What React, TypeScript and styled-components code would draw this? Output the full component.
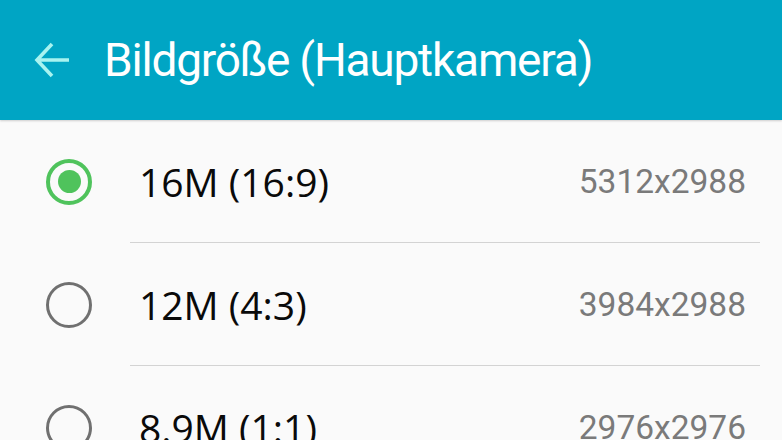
import styled, { createGlobalStyle } from 'styled-components';

type SizeOption = {
  label: string;
  resolution: string;
};

const options: SizeOption[] = [
  { label: '16M (16:9)', resolution: '5312x2988' },
  { label: '12M (4:3)', resolution: '3984x2988' },
  { label: '8.9M (1:1)', resolution: '2976x2976' },
  { label: '6M (16:9)', resolution: '3264x1836' },
];

const GlobalStyle = createGlobalStyle`
  html, body {
    margin: 0;
    padding: 0;
    width: 782px;
    height: 440px;
    overflow: hidden;
    background: #fafafa;
  }
`;

export default function App() {
  const selected = 0;
  return (
    <Screen>
      <GlobalStyle />
      <TitleBar>
        <BackButton aria-label="Zurück">
          <svg width="36" height="36" viewBox="0 0 36 36" fill="none">
            <path
              d="M35 18H3M18 2L3 18L18 34"
              stroke="#a8f3f0"
              strokeWidth="3.6"
              strokeLinecap="butt"
              strokeLinejoin="miter"
            />
          </svg>
        </BackButton>
        <Title>Bildgröße (Hauptkamera)</Title>
      </TitleBar>
      <List>
        {options.map((option, i) => (
          <Row key={option.label}>
            <RadioCell>
              <Radio $checked={i === selected} />
            </RadioCell>
            <Content>
              <Label>{option.label}</Label>
              <Resolution>{option.resolution}</Resolution>
            </Content>
          </Row>
        ))}
      </List>
    </Screen>
  );
}

const Screen = styled.div`
  width: 782px;
  height: 440px;
  background: #fafafa;
  overflow: hidden;
`;

const TitleBar = styled.header`
  height: 120px;
  background: #00a5c4;
  display: flex;
  align-items: center;
  box-shadow: 0 1px 2px rgba(0, 0, 0, 0.18);
  position: relative;
  z-index: 1;
`;

const BackButton = styled.button`
  width: 36px;
  height: 36px;
  margin-left: 34px;
  padding: 0;
  border: none;
  background: none;
  display: flex;
  align-items: center;
  justify-content: center;
`;

const Title = styled.h1`
  margin: 0 0 0 34px;
  font-family: Roboto, 'Liberation Sans', sans-serif;
  font-size: 46px;
  font-weight: 400;
  color: #ffffff;
  letter-spacing: -1.2px;
`;

const List = styled.ul`
  margin: 0;
  padding: 0;
  list-style: none;
`;

const Row = styled.li`
  height: 123px;
  display: flex;
`;

const RadioCell = styled.div`
  width: 130px;
  display: flex;
  align-items: center;
  padding-left: 46px;
  box-sizing: border-box;
`;

const Radio = styled.span<{ $checked: boolean }>`
  width: 46px;
  height: 46px;
  box-sizing: border-box;
  border-radius: 50%;
  border: ${(p) => (p.$checked ? '4px solid #4fc35c' : '3.5px solid #707070')};
  display: flex;
  align-items: center;
  justify-content: center;

  &::after {
    content: '';
    width: 23px;
    height: 23px;
    border-radius: 50%;
    background: #4fc35c;
    display: ${(p) => (p.$checked ? 'block' : 'none')};
  }
`;

const Content = styled.div`
  flex: 1;
  margin-right: 22px;
  padding: 0 14px 0 9px;
  border-bottom: 1px solid #d3d3d3;
  display: flex;
  align-items: center;
  justify-content: space-between;
`;

const Label = styled.span`
  font-family: 'Open Sans', 'Noto Sans', sans-serif;
  font-size: 39px;
  color: #0a0a0a;
`;

const Resolution = styled.span`
  font-family: Roboto, 'Liberation Sans', sans-serif;
  font-size: 33.5px;
  color: #7a7a7a;
`;
